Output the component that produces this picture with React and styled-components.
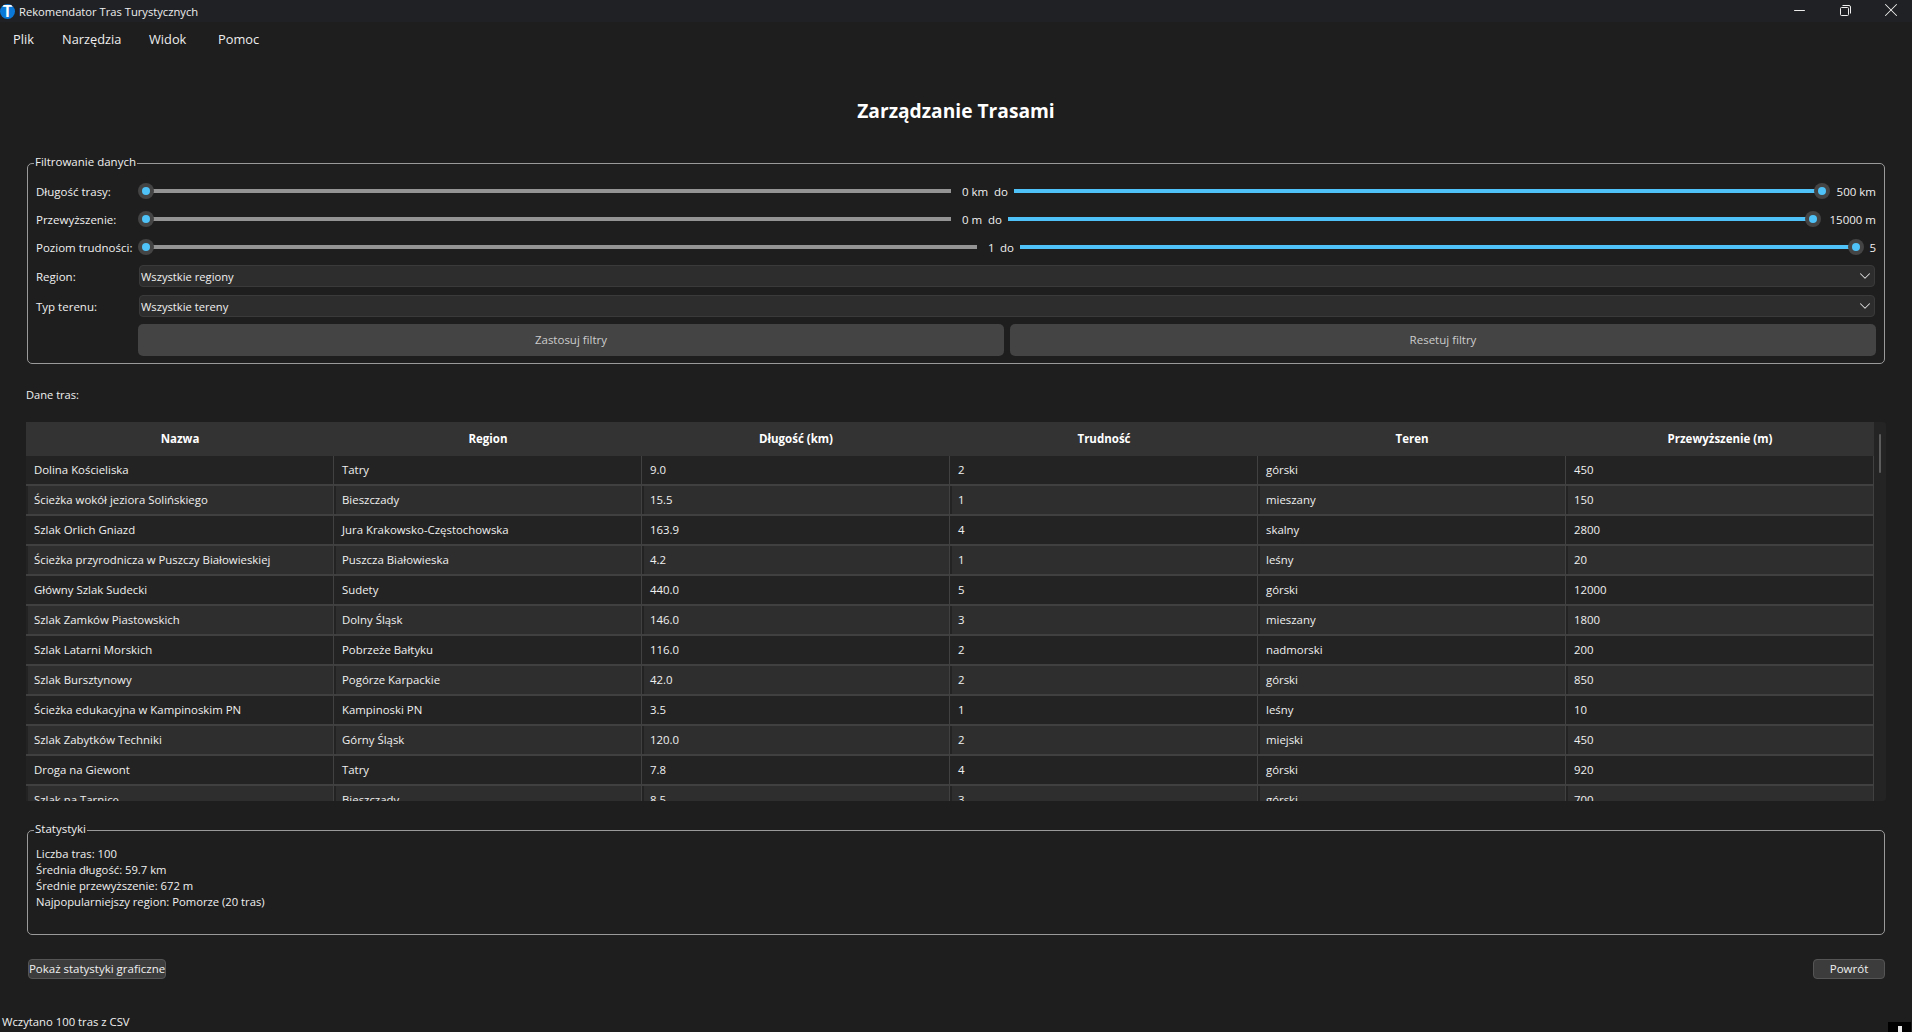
import React from "react";
import styled, { createGlobalStyle } from "styled-components";
import { Minus, X, ChevronDown } from "lucide-react";

const Global = createGlobalStyle`
  html, body { margin: 0; padding: 0; background: #1e1e1e; }
  body { font-family: "Open Sans", "Noto Sans", sans-serif; font-size: 11.5px; color: #f0f0f0; }
  * { box-sizing: border-box; }
`;

const Window = styled.div`
  width: 1912px; height: 1032px; overflow: hidden; position: relative;
  background: #1e1e1e; display: flex; flex-direction: column;
`;
const TitleBar = styled.div`
  height: 22px; background: #202124; display: flex; align-items: center; flex: none;
`;
const AppIcon = styled.div`
  width: 15px; height: 15px; border-radius: 50%; background: #0a78d7; color: #fff;
  font: 700 16px "Liberation Sans", sans-serif; line-height: 15px; text-align: center; overflow: hidden;
`;
const AppTitle = styled.div`
  margin-left: 4px; font-size: 11.2px; color: #eee; flex: 1;
`;
const WinButtons = styled.div`
  display: flex; align-items: center; height: 22px; color: #eee; padding-bottom: 2px; margin-right: -2px;
`;
const WinBtn = styled.div`
  width: 46px; display: flex; justify-content: center; align-items: center;
`;
const MenuBar = styled.div`
  height: 34px; display: flex; align-items: center; padding-left: 13px; flex: none;
`;
const MenuItem = styled.div`
  width: ${p => p.$w}px; font-size: 12.8px; color: #eee;
`;
const PageTitle = styled.h1`
  margin: 28px 0 0; height: 71px; text-align: center; font-size: 19.2px; font-weight: 700; color: #fff;
  line-height: 54px;
`;
const Group = styled.fieldset`
  margin: 0 27px; padding: 0 8px 7px 8px; border: 1px solid #9a9a9a; border-radius: 5px; min-width: 0; flex: none;
`;
const Legend = styled.legend`
  padding: 0 1px 2px; margin-left: -2px; line-height: 14px; font-size: 11.5px; color: #f0f0f0;
`;
const FilterGrid = styled.div`
  display: grid; grid-template-columns: 102px 1fr; row-gap: 8px; margin-top: 10px; align-items: center;
`;
const Label = styled.div`
  color: #f0f0f0; white-space: nowrap;
`;
const SliderRow = styled.div`
  height: 20px; display: flex; align-items: center;
`;
const Slider = styled.div`
  flex: none; width: ${p => p.$w}px; position: relative; height: 16px; display: flex; align-items: center;
`;
const Track = styled.div`
  height: 4px; flex: 1;
  background: ${p => (p.$on ? "#4fc3f7" : "#949494")};
  margin: ${p => (p.$on ? "0 8px 0 0" : "0 0 0 8px")};
`;
const Handle = styled.div`
  position: absolute; top: 0; width: 16px; height: 16px; border-radius: 50%;
  background: #444; display: flex; align-items: center; justify-content: center;
  ${p => (p.$right ? "right: 0;" : "left: 0;")}
  &::after { content: ""; width: 8px; height: 8px; border-radius: 50%; background: #4fc3f7; }
`;
const MidLabels = styled.div`
  flex: none; width: ${p => p.$w}px; display: flex; justify-content: space-between;
  padding: 0 6px 0 11px; white-space: nowrap;
`;
const EndValue = styled.div`
  flex: 1; text-align: right; white-space: nowrap;
`;
const Combo = styled.div`
  height: 22px; margin-left: 1px; background: #2d2d2d; border: 1px solid #3a3a3a; border-radius: 4px;
  display: flex; align-items: center; justify-content: space-between; padding: 0 0 0 1px; width: 1736px;
  color: #f0f0f0; font-size: 11.2px;
  svg { color: #ddd; }
`;
const ButtonsRow = styled.div`
  display: grid; grid-template-columns: 866px 866px; column-gap: 6px; margin: 7px 0 0 102px;
`;
const FilterBtn = styled.div`
  height: 32px; background: #444; border-radius: 5px; display: flex; align-items: center; justify-content: center;
  color: #ccc; padding-bottom: 1px;
`;
const DataLabel = styled.div`
  margin: 23px 0 0 26px; line-height: 15px; height: 16px; flex: none; font-size: 11.1px;
`;
const TableWrap = styled.div`
  margin: 19px 26px 0; height: 379px; display: flex; overflow: hidden; flex: none; border-radius: 0 3px 3px 0;
`;
const Table = styled.div`
  width: 1848px; overflow: hidden; flex: none;
`;
const Row = styled.div`
  display: grid; grid-template-columns: repeat(6, 1fr);
`;
const Head = styled.div`
  height: 34px; background: #333; display: flex; align-items: center; justify-content: center;
  font-weight: 700; color: #fff; padding-bottom: 1px;
`;
const Cell = styled.div`
  height: 30px; background: #232323; padding: ${p => (p.$alt ? "0 0 2px 2px" : "0 0 2px 0")};
  border-right: 1px solid #414141;
  background-image: linear-gradient(#404040, #404040);
  background-size: 100% 2px; background-repeat: no-repeat; background-position: bottom;
`;
const CellInner = styled.div`
  height: 28px; display: flex; align-items: center; padding: 0 0 1px ${p => (p.$alt ? "6px" : "8px")};
  background: ${p => (p.$alt ? "#2e2e2e" : "#232323")};
  white-space: nowrap; font-size: 11.4px;
`;
const ScrollTrack = styled.div`
  width: 12px; background: #242424; flex: none; display: flex; justify-content: center;
`;
const ScrollThumb = styled.div`
  width: 2px; height: 39px; margin-top: 12px; background: #5c5c5c; border-radius: 1px;
`;
const StatsGroup = styled(Group)`
  margin-top: 21px; height: 113px; padding-top: 8px;
`;
const StatLine = styled.div`
  line-height: 16px; color: #f0f0f0; font-size: 11.25px;
`;
const BottomBar = styled.div`
  display: flex; justify-content: space-between; margin: 24px 27px 0 28px; flex: none;
`;
const Btn = styled.div`
  height: 20px; width: ${p => p.$w}px; background: #3c3c3c; border: 1px solid #555; border-radius: 4px;
  display: flex; align-items: center; justify-content: center; color: #f0f0f0; white-space: nowrap;
  padding-bottom: 1px;
`;
const Status = styled.div`
  margin: 35px 1px 0 2px; line-height: 16px; height: 18px; flex: none; display: flex; justify-content: space-between;
  font-size: 11.3px;
`;
const Corner = styled.div`
  width: 23px; height: 10px; background: #000; margin-top: 8px; position: relative;
  &::after { content: ""; position: absolute; left: 10px; top: 4px; width: 4px; height: 6px; background: #e8e8e8; }
`;

const columns = ["Nazwa", "Region", "Długość (km)", "Trudność", "Teren", "Przewyższenie (m)"];
const rows = [
  ["Dolina Kościeliska", "Tatry", "9.0", "2", "górski", "450"],
  ["Ścieżka wokół jeziora Solińskiego", "Bieszczady", "15.5", "1", "mieszany", "150"],
  ["Szlak Orlich Gniazd", "Jura Krakowsko-Częstochowska", "163.9", "4", "skalny", "2800"],
  ["Ścieżka przyrodnicza w Puszczy Białowieskiej", "Puszcza Białowieska", "4.2", "1", "leśny", "20"],
  ["Główny Szlak Sudecki", "Sudety", "440.0", "5", "górski", "12000"],
  ["Szlak Zamków Piastowskich", "Dolny Śląsk", "146.0", "3", "mieszany", "1800"],
  ["Szlak Latarni Morskich", "Pobrzeże Bałtyku", "116.0", "2", "nadmorski", "200"],
  ["Szlak Bursztynowy", "Pogórze Karpackie", "42.0", "2", "górski", "850"],
  ["Ścieżka edukacyjna w Kampinoskim PN", "Kampinoski PN", "3.5", "1", "leśny", "10"],
  ["Szlak Zabytków Techniki", "Górny Śląsk", "120.0", "2", "miejski", "450"],
  ["Droga na Giewont", "Tatry", "7.8", "4", "górski", "920"],
  ["Szlak na Tarnicę", "Bieszczady", "8.5", "3", "górski", "700"],
];

const RangeRow = ({ label, from, to, minW, midW, maxW }) => (
  <>
    <Label>{label}</Label>
    <SliderRow>
      <Slider $w={minW}><Track /><Handle /></Slider>
      <MidLabels $w={midW}><span>{from}</span><span>do</span></MidLabels>
      <Slider $w={maxW}><Track $on /><Handle $right /></Slider>
      <EndValue>{to}</EndValue>
    </SliderRow>
  </>
);

export default function App() {
  return (
    <Window>
      <Global />
      <TitleBar>
        <AppIcon>T</AppIcon>
        <AppTitle>Rekomendator Tras Turystycznych</AppTitle>
        <WinButtons>
          <WinBtn><Minus size={17} strokeWidth={1.4} /></WinBtn>
          <WinBtn>
            <svg width="11" height="11" viewBox="0 0 11 11" fill="none" stroke="currentColor" strokeWidth="1">
              <rect x="0.5" y="2.5" width="8" height="8" rx="1" />
              <path d="M2.5 0.5H9a1.5 1.5 0 0 1 1.5 1.5V8.5" />
            </svg>
          </WinBtn>
          <WinBtn><X size={22} strokeWidth={1.1} /></WinBtn>
        </WinButtons>
      </TitleBar>
      <MenuBar>
        <MenuItem $w={49}>Plik</MenuItem>
        <MenuItem $w={87}>Narzędzia</MenuItem>
        <MenuItem $w={69}>Widok</MenuItem>
        <MenuItem $w={60}>Pomoc</MenuItem>
      </MenuBar>
      <PageTitle>Zarządzanie Trasami</PageTitle>
      <Group>
        <Legend>Filtrowanie danych</Legend>
        <FilterGrid>
          <RangeRow label="Długość trasy:" from="0 km" to="500 km" minW={813} midW={63} maxW={816} />
          <RangeRow label="Przewyższenie:" from="0 m" to="15000 m" minW={813} midW={57} maxW={813} />
          <RangeRow label="Poziom trudności:" from="1" to="5" minW={839} midW={43} maxW={844} />
          <Label>Region:</Label>
          <Combo>Wszystkie regiony<ChevronDown size={18} strokeWidth={1.4} /></Combo>
          <Label>Typ terenu:</Label>
          <Combo>Wszystkie tereny<ChevronDown size={18} strokeWidth={1.4} /></Combo>
        </FilterGrid>
        <ButtonsRow>
          <FilterBtn>Zastosuj filtry</FilterBtn>
          <FilterBtn>Resetuj filtry</FilterBtn>
        </ButtonsRow>
      </Group>
      <DataLabel>Dane tras:</DataLabel>
      <TableWrap>
        <Table>
          <Row>{columns.map(c => <Head key={c}>{c}</Head>)}</Row>
          {rows.map((r, i) => (
            <Row key={r[0]}>
              {r.map((c, j) => (
                <Cell key={j} $alt={i % 2 === 1}><CellInner $alt={i % 2 === 1}>{c}</CellInner></Cell>
              ))}
            </Row>
          ))}
        </Table>
        <ScrollTrack><ScrollThumb /></ScrollTrack>
      </TableWrap>
      <StatsGroup>
        <Legend>Statystyki</Legend>
        <StatLine>Liczba tras: 100</StatLine>
        <StatLine>Średnia długość: 59.7 km</StatLine>
        <StatLine>Średnie przewyższenie: 672 m</StatLine>
        <StatLine>Najpopularniejszy region: Pomorze (20 tras)</StatLine>
      </StatsGroup>
      <BottomBar>
        <Btn $w={138}>Pokaż statystyki graficzne</Btn>
        <Btn $w={72}>Powrót</Btn>
      </BottomBar>
      <Status>Wczytano 100 tras z CSV<Corner /></Status>
    </Window>
  );
}
